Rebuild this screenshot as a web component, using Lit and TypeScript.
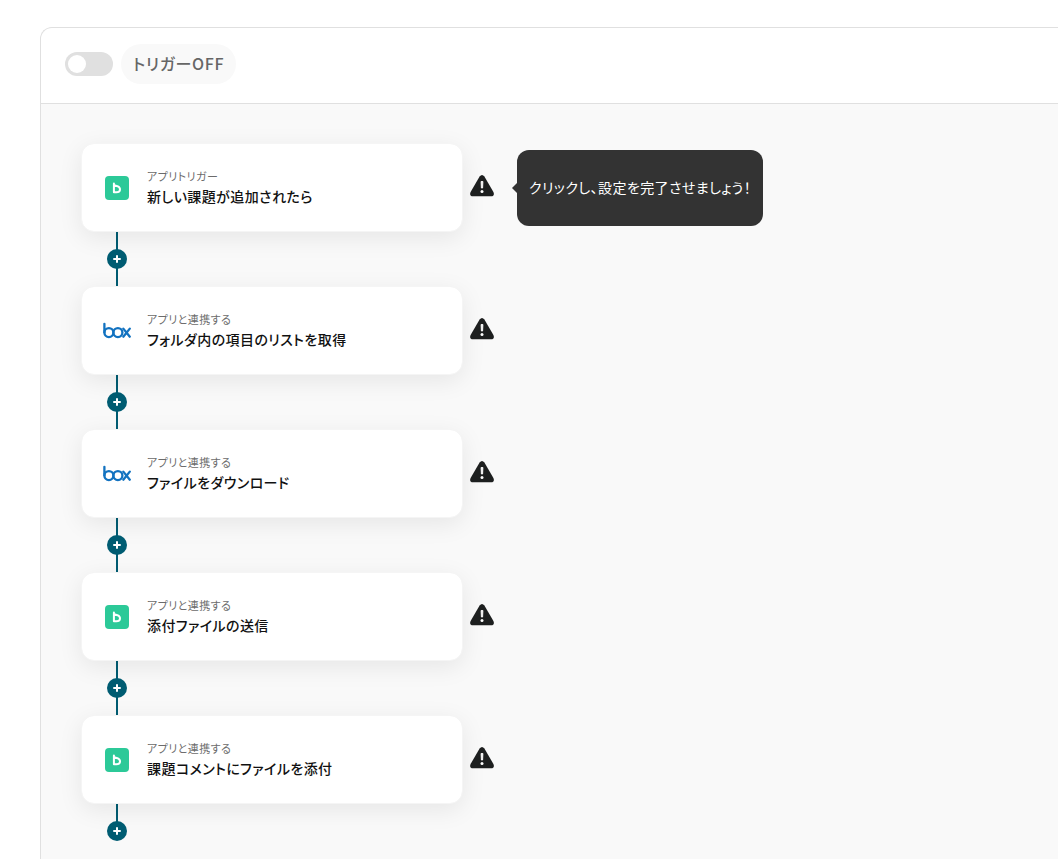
import { LitElement, html, css } from "lit";
import { customElement, property, state } from "lit/decorators.js";

type App = "backlog" | "box";
interface Step { app: App; kind: string; title: string; hint?: string }

const STEPS: Step[] = [
  { app: "backlog", kind: "アプリトリガー", title: "新しい課題が追加されたら", hint: "クリックし、設定を完了させましょう！" },
  { app: "box", kind: "アプリと連携する", title: "フォルダ内の項目のリストを取得" },
  { app: "box", kind: "アプリと連携する", title: "ファイルをダウンロード" },
  { app: "backlog", kind: "アプリと連携する", title: "添付ファイルの送信" },
  { app: "backlog", kind: "アプリと連携する", title: "課題コメントにファイルを添付" },
];

const backlogIcon = html`<svg class="logo" viewBox="0 0 30 30" aria-hidden="true">
  <rect x="3" y="3" width="24" height="24" rx="4" fill="#2cc998" />
  <path d="M11.9 10.4V19.2H14.4C18.8 19.2 19.2 14.8 15.4 13.2L12.4 12.3" fill="none" stroke="#fff" stroke-width="2" stroke-linecap="round" stroke-linejoin="round" />
</svg>`;

const boxIcon = html`<svg class="logo" viewBox="0 0 30 30" aria-hidden="true">
  <g fill="none" stroke="#1272c0" stroke-width="2.3" stroke-linecap="round">
    <path d="M2.4 7.8V16.4" />
    <circle cx="6.9" cy="16.6" r="4.5" />
    <circle cx="15.9" cy="16.6" r="4.5" />
    <path d="M21.3 12.6L27.8 20.7M27.8 12.6L21.3 20.7" />
  </g>
</svg>`;

@customElement("flow-step")
export class FlowStep extends LitElement {
  @property({ attribute: false }) step!: Step;

  static styles = css`
    :host { display: block; }
    .row { display: flex; align-items: center; gap: 7px; }
    button { font: inherit; color: inherit; border: 0; padding: 0; cursor: pointer; }
    .card {
      box-sizing: border-box;
      flex: 0 1 382px;
      min-height: 89px;
      display: flex;
      align-items: center;
      gap: 15px;
      padding: 16px 20px;
      text-align: left;
      background: #fff;
      background-clip: padding-box;
      border: 1px solid #f5f5f5;
      border-radius: 13px;
      box-shadow: 0 6px 24px rgba(0, 0, 0, 0.08);
    }
    .logo { display: block; width: 30px; height: 30px; flex: none; }
    .text { display: flex; flex-direction: column; padding-bottom: 2px; }
    .kind { font-size: 11px; line-height: 18px; color: #6b6b6b; letter-spacing: 0.04em; }
    .title { font-size: 14px; line-height: 22px; font-weight: 500; color: #111; letter-spacing: 0.03em; }
    .status { display: flex; align-items: center; gap: 23px; }
    .warn { display: block; background: none; }
    .warn svg { display: block; width: 24px; height: 28px; }
    .hint {
      position: relative;
      display: flex;
      align-items: center;
      box-sizing: border-box;
      min-height: 76px;
      padding: 0 12px 2px;
      border-radius: 12px;
      background: #333;
      color: #fff;
      font-size: 14px;
      white-space: nowrap;
      letter-spacing: 0.03em;
    }
    .hint::before {
      content: "";
      position: absolute;
      left: -5px;
      top: 50%;
      margin-top: -5px;
      border: 5px solid transparent;
      border-left: 0;
      border-right-color: #333;
    }
    .link { width: 72px; height: 54px; display: grid; place-items: center; background: linear-gradient(#005c72, #005c72) center / 2px 100% no-repeat; }
    :host(:last-child) .link { background-size: 2px 50%; background-position: top center; }
    .add { width: 20px; height: 20px; border-radius: 50%; background: #005c72; }
    .add svg { display: block; width: 20px; height: 20px; }
  `;

  render() {
    const s = this.step;
    return html`
      <div class="row">
        <button class="card">
          ${s.app === "box" ? boxIcon : backlogIcon}
          <span class="text"><span class="kind">${s.kind}</span><span class="title">${s.title}</span></span>
        </button>
        <div class="status">
          <button class="warn" aria-label="設定が未完了です">
            <svg viewBox="0 0 24 28" aria-hidden="true">
              <path d="M9.6 2.6Q12 -0.4 14.4 2.6L23.4 17.9Q25 21.9 21 22.3H3Q-1 21.9 0.6 17.9Z" fill="#1d1f1f" />
              <path d="M11.1 7.5H12.9L12.6 14H11.4Z" fill="#fff" stroke="#fff" stroke-width=".9" stroke-linejoin="round" />
              <circle cx="12" cy="17.6" r="1.5" fill="#fff" />
            </svg>
          </button>
          ${s.hint ? html`<div class="hint" role="tooltip">${s.hint}</div>` : null}
        </div>
      </div>
      <div class="link">
        <button class="add" aria-label="ステップを追加">
          <svg viewBox="0 0 20 20" aria-hidden="true"><path d="M10 7V13M7 10H13" stroke="#fff" stroke-width="2" stroke-linecap="round" /></svg>
        </button>
      </div>
    `;
  }
}

@customElement("app-root")
export class AppRoot extends LitElement {
  @state() private on = false;

  static styles = css`
    :host {
      display: flex;
      box-sizing: border-box;
      min-height: 100vh;
      padding: 27px 0 0 40px;
      background: #fff;
      font-family: "Noto Sans CJK JP", sans-serif;
      font-feature-settings: "palt";
    }
    .panel {
      flex: 1;
      display: flex;
      flex-direction: column;
      border: 1px solid #e0e0e0;
      border-width: 1px 0 0 1px;
      border-top-left-radius: 12px;
      overflow: hidden;
    }
    .head { display: flex; align-items: center; gap: 8px; padding: 16px 24px 19px; border-bottom: 1px solid #e0e0e0; }
    .switch {
      appearance: none;
      margin: 0;
      width: 48px;
      height: 24px;
      padding: 3px;
      box-sizing: border-box;
      display: flex;
      border-radius: 12px;
      background: #e0e0e0;
      cursor: pointer;
    }
    .switch::before { content: ""; width: 18px; height: 18px; border-radius: 50%; background: #fff; }
    .switch:checked { justify-content: flex-end; background: #005c72; }
    .state {
      padding: 0 12px 2px;
      border-radius: 20px;
      background: #f9f9f9;
      color: #666;
      font-size: 16px;
      line-height: 38px;
      font-weight: 500;
      letter-spacing: 0.04em;
    }
    .canvas { flex: 1; padding: 39px 40px 0; background: #f9f9f9; }
  `;

  render() {
    return html`
      <section class="panel">
        <header class="head">
          <input id="trigger" class="switch" type="checkbox" role="switch" .checked=${this.on}
            @change=${(e: Event) => (this.on = (e.target as HTMLInputElement).checked)} />
          <label class="state" for="trigger">トリガー${this.on ? "ON" : "OFF"}</label>
        </header>
        <main class="canvas">${STEPS.map((s) => html`<flow-step .step=${s}></flow-step>`)}</main>
      </section>
    `;
  }
}
